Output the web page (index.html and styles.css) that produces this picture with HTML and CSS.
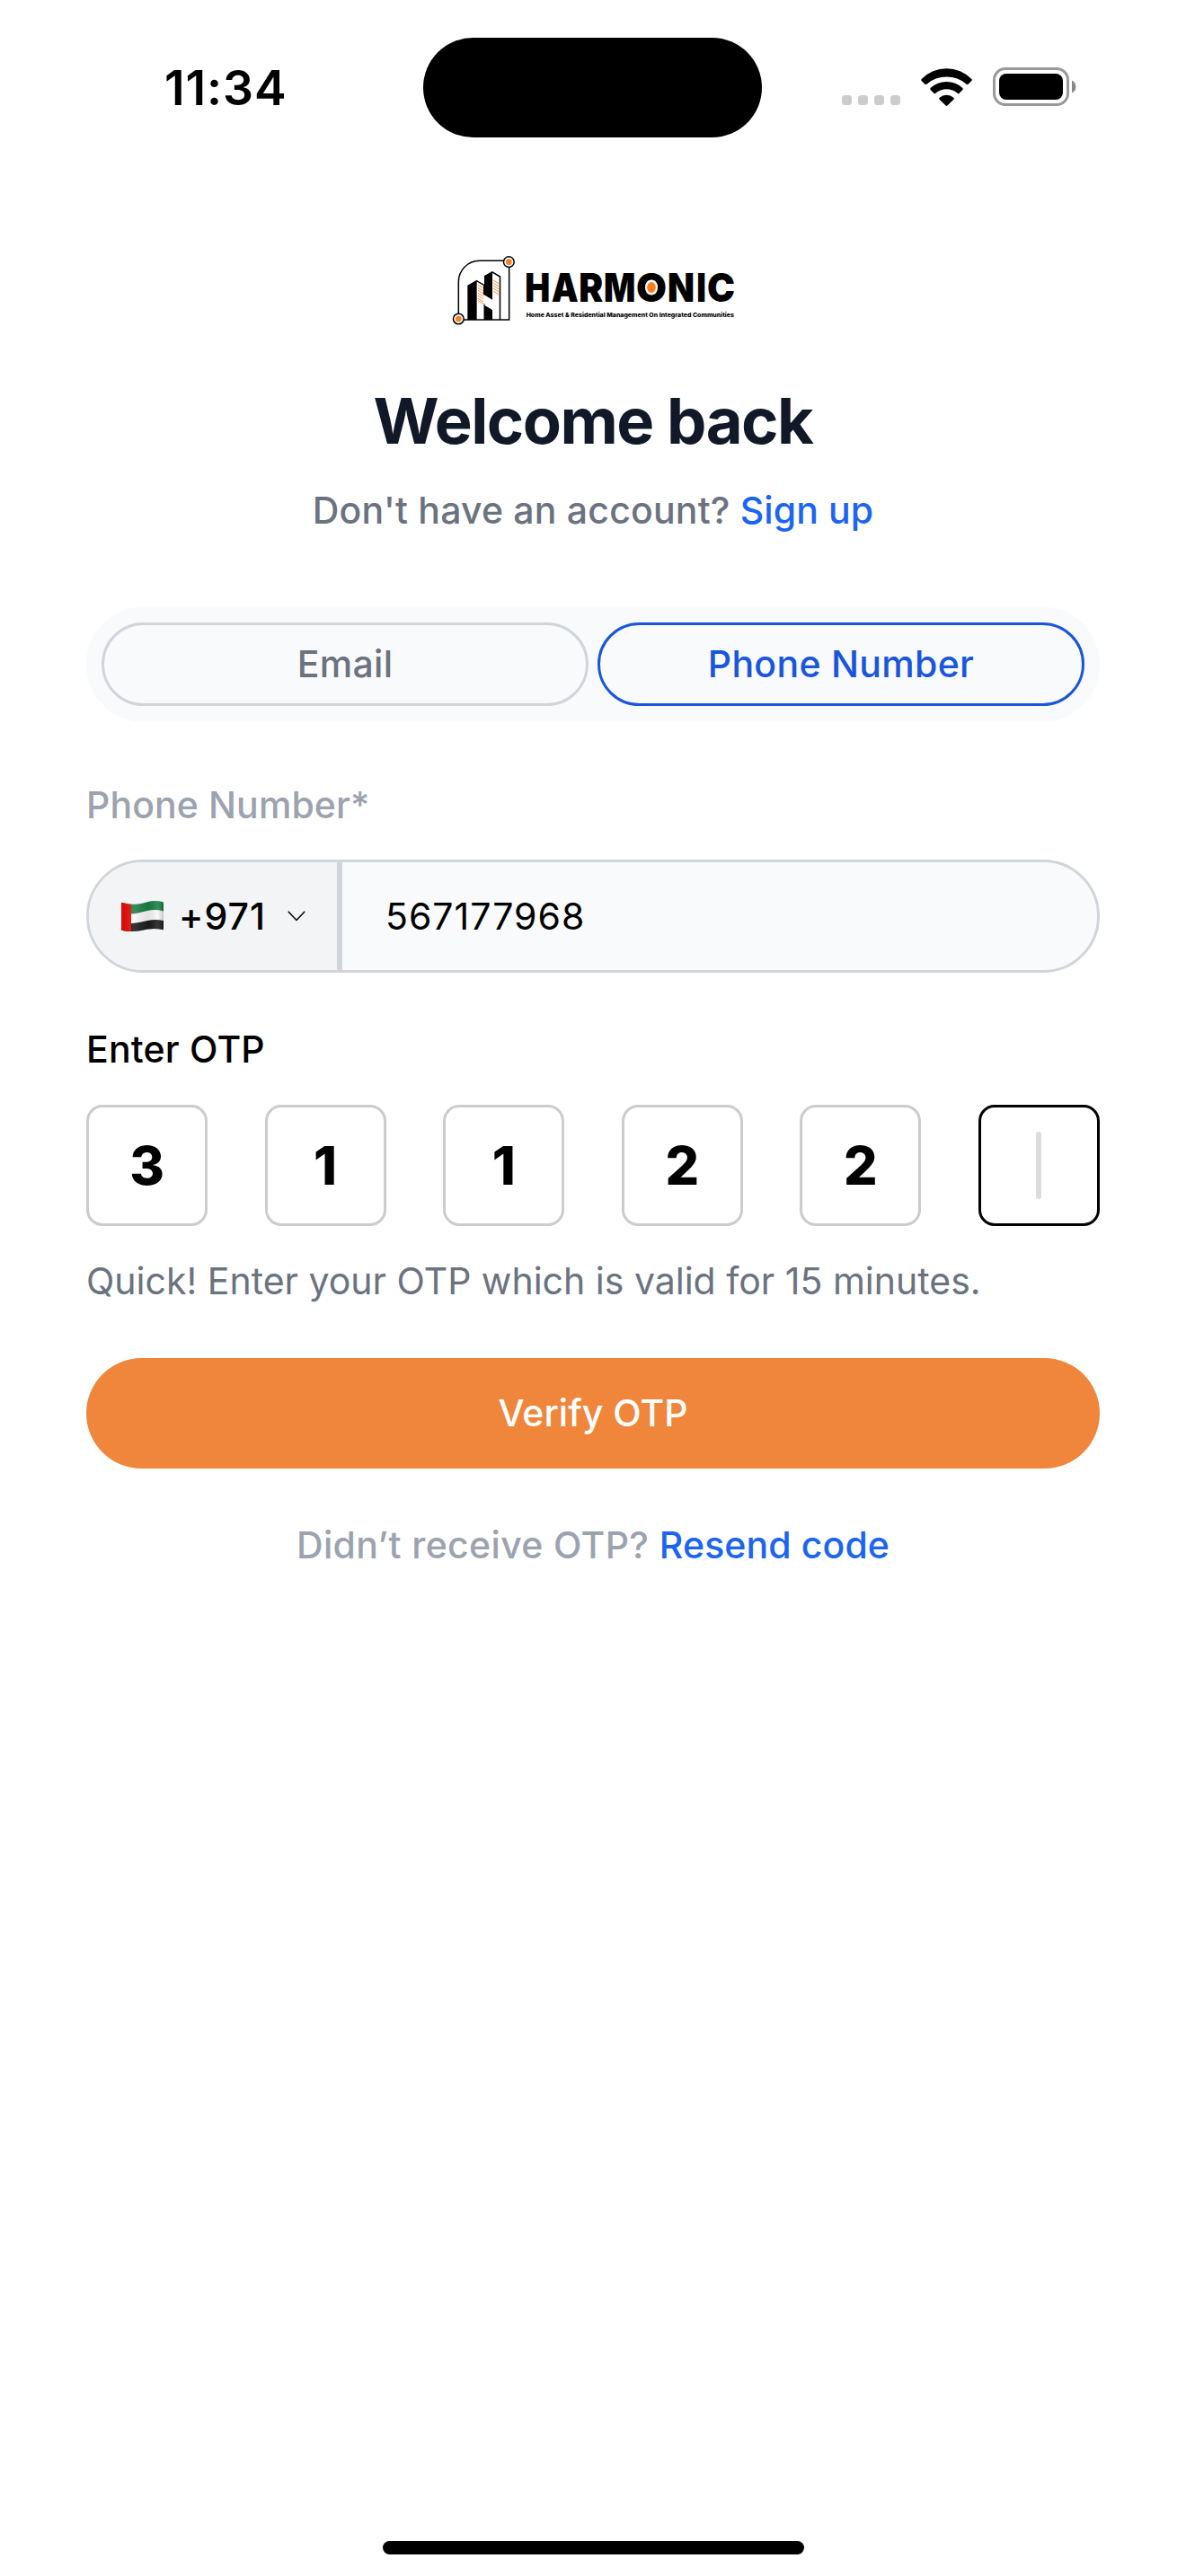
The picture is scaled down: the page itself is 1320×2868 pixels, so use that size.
FILE: index.html
```
<!DOCTYPE html>
<html lang="en">
<head>
<meta charset="utf-8">
<title>Harmonic – Welcome back</title>
<link rel="stylesheet" href="styles.css">
</head>
<body>
<div class="screen">
  <header class="status">
    <div class="time">11:34</div>
    <div class="island"></div>
    <div class="indicators">
      <div class="signal"><i></i><i></i><i></i><i></i></div>
      <svg class="wifi" viewBox="0 0 171 126">
        <path d="M2 36A116 116 0 0 1 169 36Q172 39 169 42L158 53Q155 55 152 53A102 102 0 0 0 19 53Q16 55 13 53L2 42Q-1 39 2 36Z"/>
        <path d="M32 66A78 78 0 0 1 139 66Q142 69 139 72L128 83Q125 86 122 83A56 56 0 0 0 49 83Q46 86 43 83L32 72Q29 69 32 66Z"/>
        <path d="M62 98A35 35 0 0 1 109 98Q112 101 109 104L89 124Q85.500 128 82 124L62 104Q59 101 62 98Z"/>
      </svg>
      <svg class="battery" viewBox="0 0 94 43">
        <rect x="1.500" y="1.500" width="82" height="40" rx="12.500" fill="none" stroke="#999" stroke-width="3"/>
        <rect x="7" y="7" width="71" height="29" rx="8"/>
        <path d="M88 14.500A7.800 7.800 0 0 1 88 28.500Z" fill="#8a8a8a"/>
      </svg>
    </div>
  </header>

  <main class="content">
    <svg class="logo" viewBox="0 0 1020 330" role="img" aria-label="Harmonic">
      <path d="M61 240V131A70 70 0 0 1 131 61H215M230 75V258H75" fill="none" stroke="#000" stroke-width="4.500"/>
      <path d="M91 143L122 125V258H91Z"/>
      <path d="M120 127L146 142V175" fill="none" stroke="#000" stroke-width="4"/>
      <path d="M147 111L174 96V191L147 175Z"/>
      <path d="M172 98L199.500 114V258" fill="none" stroke="#000" stroke-width="4.500"/>
      <path d="M147 209L174 225V258H147Z"/>
      <path d="M147 205V258" stroke="#000" stroke-width="3"/>
      <path d="M126 142l18 11M126 151l18 11M126 160l18 11M126 169l18 11M126 178l18 11M126 187l18 11M126 194l18 11M177 126l18 11M177 135l18 11M177 144l18 11M177 153l18 11M177 162l18 11" stroke="#ff7f27" stroke-width="2.700"/>
      <g fill="#fff" stroke="#000" stroke-width="4.500"><circle cx="229" cy="65" r="17.500"/><circle cx="61" cy="255" r="17.500"/></g>
      <g fill="#ff7f20"><circle cx="229" cy="65" r="10"/><circle cx="61" cy="255" r="10"/></g>
      <g class="wordmark">
        <text x="283" y="197" textLength="84" lengthAdjust="spacingAndGlyphs">H</text>
        <text x="371" y="197" textLength="90" lengthAdjust="spacingAndGlyphs">A</text>
        <text x="463" y="197" textLength="81" lengthAdjust="spacingAndGlyphs">R</text>
        <text x="546" y="197" textLength="106" lengthAdjust="spacingAndGlyphs">M</text>
        <text x="654" y="197" textLength="102" lengthAdjust="spacingAndGlyphs">O</text>
        <text x="759" y="197" textLength="90" lengthAdjust="spacingAndGlyphs">N</text>
        <text x="856" y="197" textLength="32" lengthAdjust="spacingAndGlyphs">I</text>
        <text x="891" y="197" textLength="93" lengthAdjust="spacingAndGlyphs">C</text>
      </g>
      <ellipse cx="705" cy="150" rx="21" ry="25" fill="#fff"/>
      <ellipse cx="705" cy="150" rx="14.500" ry="18" fill="#ff7f20"/>
      <text class="tagline" x="287" y="248" textLength="694" lengthAdjust="spacingAndGlyphs">Home Asset &amp; Residential Management On Integrated Communities</text>
    </svg>

    <h1 class="title">Welcome back</h1>
    <p class="subtitle">Don't have an account? <a class="link">Sign up</a></p>

    <div class="tabs">
      <button class="tab">Email</button>
      <button class="tab tab-active">Phone Number</button>
    </div>

    <div class="label label-muted">Phone Number*</div>
    <div class="phone">
      <div class="code">
        <svg class="flag" viewBox="0 0 47 34">
          <defs>
            <clipPath id="wave"><path d="M0 3Q0 1.500 1.500 2C11 5 19 4 28 1.500Q37-1 45.500 1Q47 1.300 47 2.500V31Q47 32.500 45.500 32C38 30 30 31 22 33Q11 35 1.500 33Q0 33 0 31.500Z"/></clipPath>
            <linearGradient id="shade"><stop offset="0" stop-opacity=".05"/><stop offset=".3" stop-color="#fff" stop-opacity=".12"/><stop offset=".65" stop-opacity=".08"/><stop offset=".85" stop-color="#fff" stop-opacity=".12"/><stop offset="1" stop-opacity=".2"/></linearGradient>
          </defs>
          <g clip-path="url(#wave)">
            <rect width="47" height="34" fill="#1c7f45"/>
            <path d="M0 14C12 16 20 13 29 11Q38 9 47 11.500V34H0Z" fill="#f7f7f7"/>
            <path d="M0 25C12 26 20 24 29 22Q38 20 47 22V34H0Z" fill="#1c1c1c"/>
            <rect width="11" height="34" fill="#e60a0a"/>
            <rect width="47" height="34" fill="url(#shade)"/>
          </g>
        </svg>
        <span class="dial">+971</span>
        <svg class="chevron" viewBox="0 0 20 12"><path d="M.8.800L10 10.500L19.200.800" fill="none" stroke="#000" stroke-width="1.500"/></svg>
      </div>
      <div class="number">567177968</div>
    </div>

    <div class="label label-otp">Enter OTP</div>
    <div class="otp">
      <div class="cell">3</div>
      <div class="cell">1</div>
      <div class="cell">1</div>
      <div class="cell">2</div>
      <div class="cell">2</div>
      <div class="cell cell-focus"><span class="caret"></span></div>
    </div>
    <p class="hint">Quick! Enter your OTP which is valid for 15 minutes.</p>

    <button class="verify">Verify OTP</button>
    <p class="resend"><span class="ask">Didn’t receive OTP?</span> <a class="link">Resend code</a></p>
  </main>

  <div class="home-indicator"></div>
</div>
</body>
</html>
```
FILE: styles.css
```
* { box-sizing: border-box; margin: 0; }

body {
  background: #fff;
  font-family: Inter, "Liberation Sans", sans-serif;
  font-size: 41px;
  line-height: 60px;
  color: #000;
}

.screen {
  width: 1320px;
  height: 2868px;
  display: flex;
  flex-direction: column;
  align-items: center;
}

/* Status bar */
.status {
  width: 100%;
  height: 153px;
  padding-top: 42px;
  display: grid;
  grid-template-columns: 471px 377px 472px;
  align-items: center;
  flex: none;
}
.time {
  padding-left: 183px;
  font-size: 53.5px;
  font-weight: 600;
  letter-spacing: .9px;
}
.island { height: 111px; border-radius: 56px; background: #000; }
.indicators { display: flex; align-items: center; padding: 0 0 2px 89px; }
.signal { display: flex; gap: 7px; padding-top: 30px; margin-right: 23px; }
.signal i { width: 11px; height: 11px; border-radius: 3.5px; background: #ccc; }
.wifi { width: 57px; height: 42px; margin-right: 23px; }
.battery { width: 94px; height: 43px; }

/* Form */
.content {
  width: 1128px;
  padding-top: 117px;
  display: flex;
  flex-direction: column;
  flex: 1;
}
.logo { width: 340px; height: 110px; align-self: center; }
.wordmark { font-weight: 900; font-size: 132px; }
.tagline { font-weight: 800; font-size: 19.5px; }

.title {
  margin-top: 47px;
  font-size: 70.5px;
  line-height: 84px;
  font-weight: 700;
  letter-spacing: -1.5px;
  text-align: center;
  color: #111928;
}
.subtitle {
  margin-top: 27px;
  text-align: center;
  font-weight: 500;
  letter-spacing: .19px;
  color: #6b7280;
}
.link { font-weight: 500; letter-spacing: .1px; color: #1c64f2; }

.tabs {
  margin-top: 77px;
  height: 129px;
  padding: 18px 17px;
  border-radius: 65px;
  background: #f9fafb;
  display: flex;
  gap: 10px;
}
.tab {
  flex: 1;
  padding: 0 6px 2px;
  border: 3px solid #d1d5db;
  border-radius: 47px;
  background: none;
  font: 500 41px/60px Inter, "Liberation Sans", sans-serif;
  letter-spacing: .3px;
  color: #6b7280;
}
.tab-active { border-color: #1a56db; color: #1a56db; }

.label { font-weight: 500; letter-spacing: .2px; }
.label-muted { margin-top: 62px; color: #9ca3af; letter-spacing: .1px; }
.label-otp { margin-top: 55px; }

.phone {
  margin-top: 31px;
  height: 126px;
  border: 3px solid #d1d5db;
  border-radius: 63px;
  background: #f9fafb;
  display: flex;
  overflow: hidden;
}
.code {
  width: 282px;
  padding-left: 36px;
  border-right: 6px solid #d1d5db;
  background: #f3f4f6;
  display: flex;
  align-items: center;
}
.flag { width: 47px; height: 34px; margin-right: 17px; }
.dial { font-weight: 500; letter-spacing: 1.1px; }
.chevron { width: 20px; height: 12px; margin-left: 24px; }
.number { padding-left: 48px; line-height: 120px; letter-spacing: 1px; }

.otp { margin-top: 32px; display: flex; justify-content: space-between; }
.cell {
  width: 135px;
  height: 135px;
  border: 3px solid #ccc;
  border-radius: 18px;
  display: flex;
  align-items: center;
  justify-content: center;
  font-size: 59px;
  font-weight: 800;
}
.cell-focus { border-color: #000; }
.caret { width: 6px; height: 75px; border-radius: 3px; background: #dcdcdc; }

.hint { margin-top: 31px; color: #6b7280; }

.verify {
  margin-top: 56px;
  height: 123px;
  padding: 0 6px 2px;
  border: 0;
  border-radius: 62px;
  background: #f0863c;
  font: 500 41px/60px Inter, "Liberation Sans", sans-serif;
  color: #fff;
}
.resend { margin-top: 55px; text-align: center; }
.ask { font-weight: 500; letter-spacing: .35px; color: #9ca3af; }

.home-indicator {
  width: 469px;
  height: 15px;
  margin-bottom: 24px;
  border-radius: 8px;
  background: #000;
  flex: none;
}
```
